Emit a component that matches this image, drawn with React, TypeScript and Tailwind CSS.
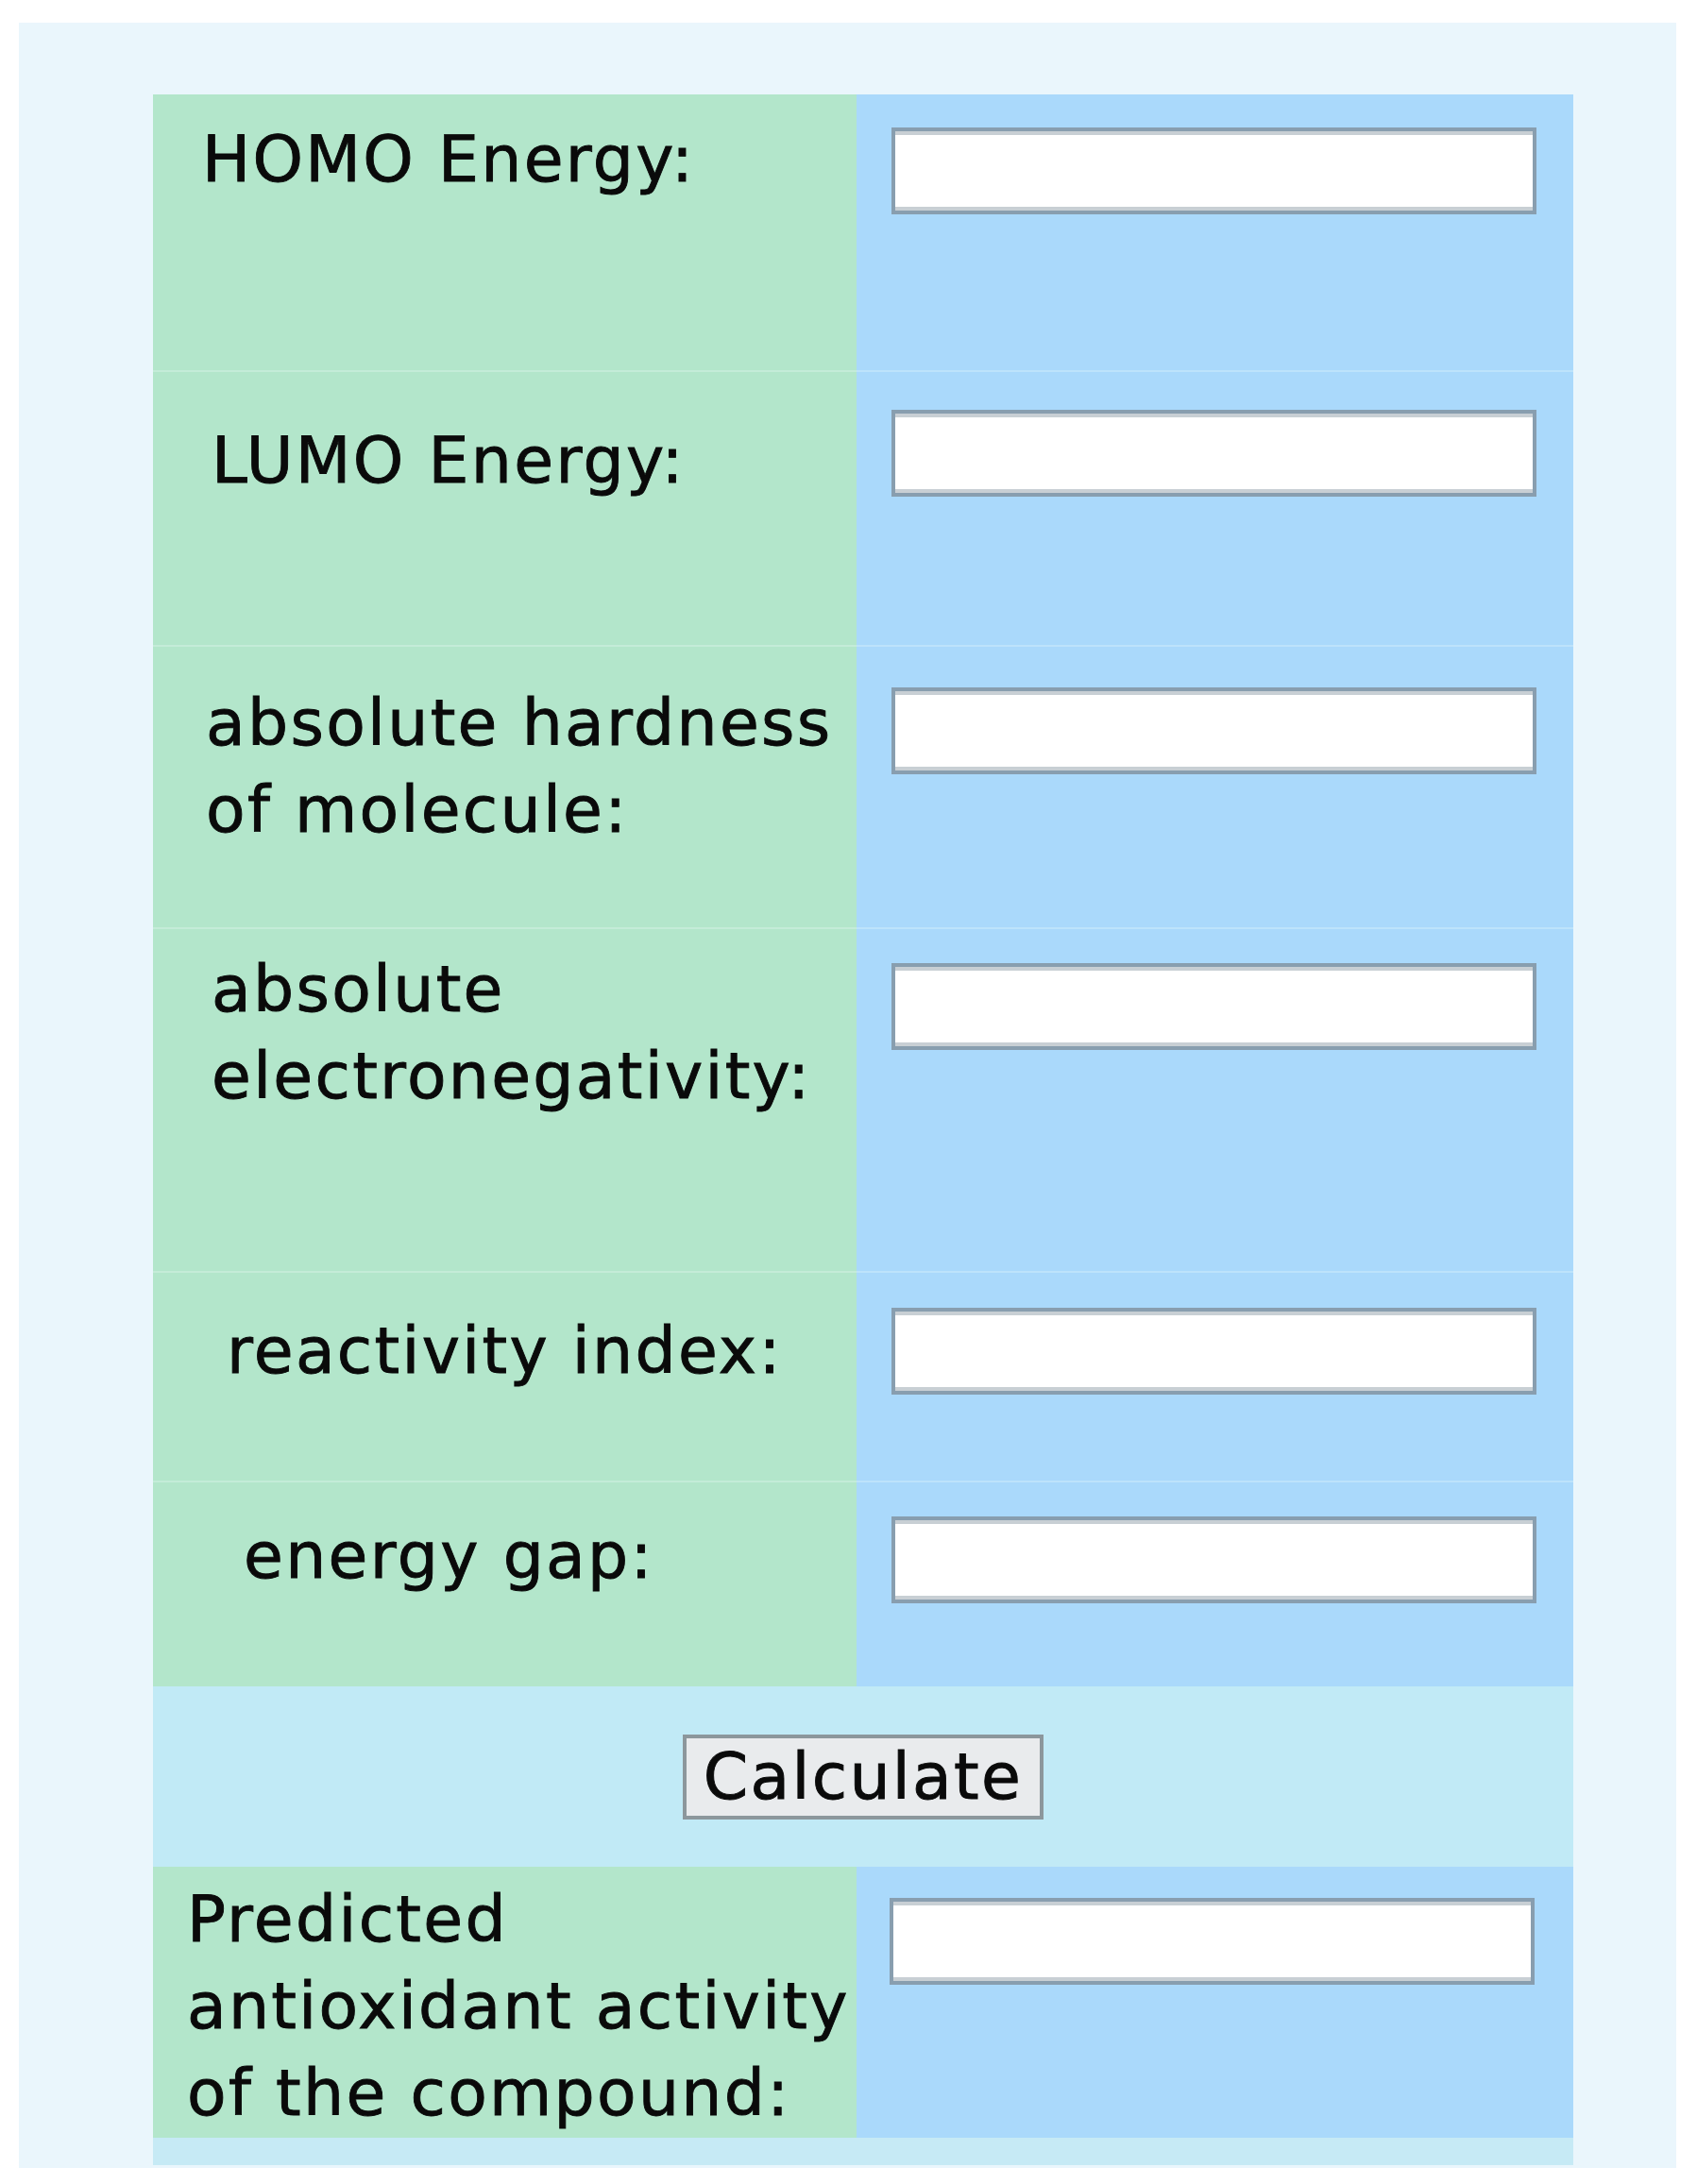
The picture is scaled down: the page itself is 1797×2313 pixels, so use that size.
import React from "react";

type Row = {
  lines: string[];
  height: string;
  labelPad: string;
  inputTop: string;
};

const rows: Row[] = [
  { lines: ["HOMO Energy:"], height: "h-[292px]", labelPad: "pt-[23px] pl-[52px]", inputTop: "pt-[35px]" },
  { lines: ["LUMO Energy:"], height: "h-[291px]", labelPad: "pt-[48px] pl-[62px]", inputTop: "pt-[40px]" },
  { lines: ["absolute hardness", "of molecule:"], height: "h-[299px]", labelPad: "pt-[35px] pl-[56px]", inputTop: "pt-[43px]" },
  { lines: ["absolute", "electronegativity:"], height: "h-[364px]", labelPad: "pt-[18px] pl-[62px]", inputTop: "pt-[36px]" },
  { lines: ["reactivity index:"], height: "h-[222px]", labelPad: "pt-[37px] pl-[78px]", inputTop: "pt-[37px]" },
  { lines: ["energy gap:"], height: "h-[218px]", labelPad: "pt-[32px] pl-[96px]", inputTop: "pt-[36px]" },
];

const label =
  "font-['DejaVu_Sans','Verdana',sans-serif] text-[68px] leading-[92px] tracking-[2.3px] text-[#0a0a0a] [-webkit-text-stroke:0.9px_#0a0a0a] whitespace-nowrap";

function Field() {
  return (
    <input
      type="text"
      className="block w-[683px] h-[92px] bg-white border-[4px] border-[#889eaf] shadow-[inset_0_4px_0_#c8cfd4,inset_0_-4px_0_#c8cfd4] outline-none"
    />
  );
}

function FormRow({ row, first }: { row: Row; first: boolean }) {
  const sep = first ? "" : "border-t-2";
  return (
    <div className={`grid grid-cols-[745px_759px] ${row.height}`}>
      <div className={`bg-[#b3e6cb] border-[#c4ecd8] ${sep} ${row.labelPad} ${label}`}>
        {row.lines.map((l) => (
          <div key={l}>{l}</div>
        ))}
      </div>
      <div className={`bg-[#aad9fb] border-[#bde3fb] ${sep} pl-[37px] ${row.inputTop}`}>
        <Field />
      </div>
    </div>
  );
}

export default function App() {
  return (
    <div className="min-h-screen bg-white pt-[24px] pl-[20px]">
      <div className="w-[1755px] bg-[#eaf6fc] pt-[76px] pb-[3px] pl-[142px]">
        <div className="w-[1504px]">
          {rows.map((r, i) => (
            <FormRow key={i} row={r} first={i === 0} />
          ))}

          <div className="h-[191px] bg-[#c1eaf6] flex items-center justify-center">
            <button
              type="button"
              className={`w-[382px] h-[90px] bg-[#e9ebed] border-[4px] border-[#8c979c] flex items-center justify-center ${label}`}
            >
              Calculate
            </button>
          </div>

          <div className="grid grid-cols-[745px_759px] h-[287px]">
            <div className={`bg-[#b3e6cb] pt-[10px] pl-[36px] ${label}`}>
              <div>Predicted</div>
              <div>antioxidant activity</div>
              <div>of the compound:</div>
            </div>
            <div className="bg-[#aad9fb] pl-[35px] pt-[33px]">
              <Field />
            </div>
          </div>

          <div className="h-[29px] bg-[#c6eaf5]" />
        </div>
      </div>
    </div>
  );
}
